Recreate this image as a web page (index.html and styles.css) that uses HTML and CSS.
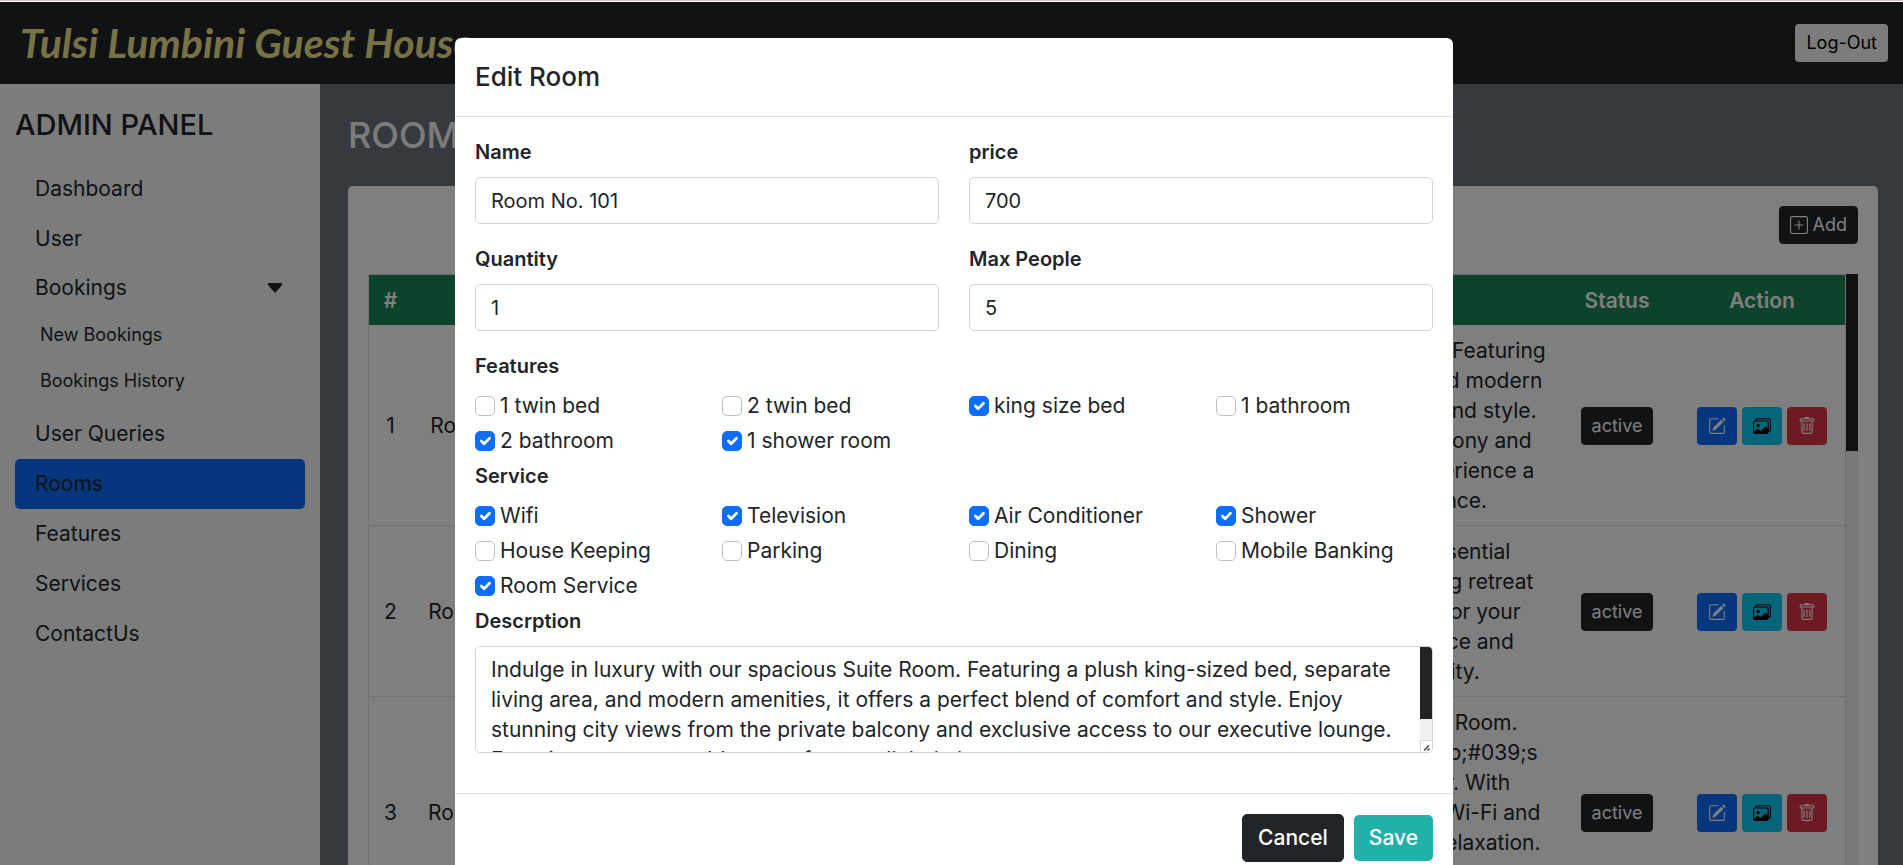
FILE: index.html
```html
<!DOCTYPE html>
<html lang="en">
<head>
<meta charset="utf-8">
<meta name="viewport" content="width=device-width, initial-scale=1">
<title>Admin Panel - Rooms</title>
<link rel="stylesheet" href="styles.css">
</head>
<body>
<svg class="sprite" aria-hidden="true">
  <symbol id="i-plus" viewBox="0 0 16 16"><path d="M14 1a1 1 0 0 1 1 1v12a1 1 0 0 1-1 1H2a1 1 0 0 1-1-1V2a1 1 0 0 1 1-1h12zM2 0a2 2 0 0 0-2 2v12a2 2 0 0 0 2 2h12a2 2 0 0 0 2-2V2a2 2 0 0 0-2-2H2z"/><path d="M8 4a.5.5 0 0 1 .5.5v3h3a.5.5 0 0 1 0 1h-3v3a.5.5 0 0 1-1 0v-3h-3a.5.5 0 0 1 0-1h3v-3A.5.5 0 0 1 8 4z"/></symbol>
  <symbol id="i-edit" viewBox="0 0 16 16"><path d="M15.502 1.94a.5.5 0 0 1 0 .706L14.459 3.69l-2-2L13.502.646a.5.5 0 0 1 .707 0l1.293 1.293zm-1.75 2.456-2-2L4.939 9.21a.5.5 0 0 0-.121.196l-.805 2.414a.25.25 0 0 0 .316.316l2.414-.805a.5.5 0 0 0 .196-.12l6.813-6.814z"/><path fill-rule="evenodd" d="M1 13.5A1.5 1.5 0 0 0 2.5 15h11a1.5 1.5 0 0 0 1.5-1.5v-6a.5.5 0 0 0-1 0v6a.5.5 0 0 1-.5.5h-11a.5.5 0 0 1-.5-.5v-11a.5.5 0 0 1 .5-.5H9a.5.5 0 0 0 0-1H2.5A1.5 1.5 0 0 0 1 2.5v11z"/></symbol>
  <symbol id="i-images" viewBox="0 0 16 16"><path d="M4.502 9a1.5 1.5 0 1 0 0-3 1.5 1.5 0 0 0 0 3z"/><path d="M14.002 13a2 2 0 0 1-2 2h-10a2 2 0 0 1-2-2V5A2 2 0 0 1 2 3a2 2 0 0 1 2-2h10a2 2 0 0 1 2 2v8a2 2 0 0 1-1.998 2zM14 2H4a1 1 0 0 0-1 1h9.002a2 2 0 0 1 2 2v7A1 1 0 0 0 15 11V3a1 1 0 0 0-1-1zM2.002 4a1 1 0 0 0-1 1v8l2.646-2.354a.5.5 0 0 1 .63-.062l2.66 1.773 3.71-3.71a.5.5 0 0 1 .577-.094l1.777 1.947V5a1 1 0 0 0-1-1h-10z"/></symbol>
  <symbol id="i-trash" viewBox="0 0 16 16"><path d="M5.5 5.5A.5.5 0 0 1 6 6v6a.5.5 0 0 1-1 0V6a.5.5 0 0 1 .5-.5Zm2.5 0a.5.5 0 0 1 .5.5v6a.5.5 0 0 1-1 0V6a.5.5 0 0 1 .5-.5Zm3 .5a.5.5 0 0 0-1 0v6a.5.5 0 0 0 1 0V6Z"/><path d="M14.5 3a1 1 0 0 1-1 1H13v9a2 2 0 0 1-2 2H5a2 2 0 0 1-2-2V4h-.5a1 1 0 0 1-1-1V2a1 1 0 0 1 1-1H6a1 1 0 0 1 1-1h2a1 1 0 0 1 1 1h3.5a1 1 0 0 1 1 1v1ZM4.118 4 4 4.059V13a1 1 0 0 0 1 1h6a1 1 0 0 0 1-1V4.059L11.882 4H4.118ZM2.5 3h11V2h-11v1Z"/></symbol>
  <symbol id="i-caret" viewBox="0 0 16 16"><path d="M7.247 11.14 2.451 5.658C1.885 5.013 2.345 4 3.204 4h9.592a1 1 0 0 1 .753 1.659l-4.796 5.48a1 1 0 0 1-1.506 0z"/></symbol>
</svg>

<header class="topbar">
  <h1 class="brand">Tulsi Lumbini Guest House</h1>
  <a class="btn btn-sm btn-light" href="#">Log-Out</a>
</header>

<div class="layout">
  <aside class="sidebar">
    <h2 class="sidebar-title">ADMIN PANEL</h2>
    <nav class="nav">
      <a class="nav-link" href="#">Dashboard</a>
      <a class="nav-link" href="#">User</a>
      <button class="nav-link nav-toggle" type="button">Bookings <svg class="caret"><use href="#i-caret"/></svg></button>
      <div class="subnav">
        <a class="subnav-link" href="#">New Bookings</a>
        <a class="subnav-link" href="#">Bookings History</a>
      </div>
      <a class="nav-link" href="#">User Queries</a>
      <a class="nav-link active" href="#">Rooms</a>
      <a class="nav-link" href="#">Features</a>
      <a class="nav-link" href="#">Services</a>
      <a class="nav-link" href="#">ContactUs</a>
    </nav>
  </aside>

  <main class="main">
    <h2 class="page-title">ROOMS</h2>
    <section class="card">
      <div class="card-actions">
        <button class="btn btn-sm btn-dark" type="button"><svg class="icon"><use href="#i-plus"/></svg>Add</button>
      </div>
      <div class="table-frame">
        <div class="table-scroll">
          <table class="table">
            <colgroup>
              <col class="col-num"><col class="col-name"><col class="col-mid"><col class="col-mid"><col class="col-mid"><col><col class="col-status"><col class="col-action">
            </colgroup>
            <thead>
              <tr><th>#</th><th>Name</th><th>Guests</th><th>Price</th><th>Quantity</th><th>Description</th><th>Status</th><th>Action</th></tr>
            </thead>
            <tbody id="rooms"></tbody>
          </table>
        </div>
        <div class="scrollbar" aria-hidden="true"><div class="thumb thumb-table"></div></div>
      </div>
    </section>
  </main>
</div>

<div class="overlay">
  <form class="modal" role="dialog" aria-labelledby="modal-title">
    <div class="modal-header"><h3 class="modal-title" id="modal-title">Edit Room</h3></div>
    <div class="modal-body">
      <div class="fields">
        <div class="field"><label class="label" for="name">Name</label><input class="control" id="name" type="text" value="Room No. 101"></div>
        <div class="field"><label class="label" for="price">price</label><input class="control" id="price" type="text" value="700"></div>
        <div class="field"><label class="label" for="quantity">Quantity</label><input class="control" id="quantity" type="text" value="1"></div>
        <div class="field"><label class="label" for="people">Max People</label><input class="control" id="people" type="text" value="5"></div>
      </div>
      <fieldset class="group">
        <legend class="label">Features</legend>
        <div class="checks">
          <label class="check"><input type="checkbox">1 twin bed</label>
          <label class="check"><input type="checkbox">2 twin bed</label>
          <label class="check"><input type="checkbox" checked>king size bed</label>
          <label class="check"><input type="checkbox">1 bathroom</label>
          <label class="check"><input type="checkbox" checked>2 bathroom</label>
          <label class="check"><input type="checkbox" checked>1 shower room</label>
        </div>
      </fieldset>
      <fieldset class="group">
        <legend class="label">Service</legend>
        <div class="checks">
          <label class="check"><input type="checkbox" checked>Wifi</label>
          <label class="check"><input type="checkbox" checked>Television</label>
          <label class="check"><input type="checkbox" checked>Air Conditioner</label>
          <label class="check"><input type="checkbox" checked>Shower</label>
          <label class="check"><input type="checkbox">House Keeping</label>
          <label class="check"><input type="checkbox">Parking</label>
          <label class="check"><input type="checkbox">Dining</label>
          <label class="check"><input type="checkbox">Mobile Banking</label>
          <label class="check"><input type="checkbox" checked>Room Service</label>
        </div>
      </fieldset>
      <div class="field">
        <label class="label" for="desc">Descrption</label>
        <div class="area-frame">
          <textarea class="area" id="desc">Indulge in luxury with our spacious Suite Room. Featuring a plush king-sized bed, separate living area, and modern amenities, it offers a perfect blend of comfort and style. Enjoy stunning city views from the private balcony and exclusive access to our executive lounge. Experience a memorable stay of unparalleled elegance.</textarea>
          <div class="scrollbar" aria-hidden="true">
            <div class="thumb thumb-area"></div>
            <svg class="grip" viewBox="0 0 12 12"><path d="M0 0h12v12H0z" fill="#fff"/><path d="M.5 12V.5H12" fill="none" stroke="#d9d9d9"/><path d="M4 10.5 9 5.5M7.5 10.5 9.5 8.5" stroke="#444" stroke-width="1.5"/></svg>
          </div>
        </div>
      </div>
    </div>
    <div class="modal-footer">
      <button class="btn btn-dark" type="reset">Cancel</button>
      <button class="btn btn-save" type="submit">Save</button>
    </div>
  </form>
</div>
<script src="script.js"></script>
</body>
</html>
```
FILE: styles.css
```css
* { box-sizing: border-box; }

body {
  margin: 0;
  height: 100vh;
  overflow: hidden;
  border-top: 1px solid #cfc4cc;
  padding-top: 1px;
  background: #fff;
  color: #212529;
  font: 400 21px/30px Inter, "Open Sans", sans-serif;
}

h1, h2, h3 { margin: 0; font-weight: 500; }
a { color: inherit; text-decoration: none; }
.sprite { display: none; }

.btn {
  display: inline-flex;
  align-items: center;
  justify-content: center;
  gap: 5px;
  border: 1px solid transparent;
  border-radius: 5px;
  padding: 8px 15px;
  font: 500 21px/30px Inter, "Open Sans", sans-serif;
  color: #fff;
}
.btn-sm { padding: 5px 10px; font-size: 18px; font-weight: 400; line-height: 26px; border-radius: 4px; min-height: 38px; }
.btn-dark { background: #212529; border-color: #212529; }
.btn-light { background: #f8f9fa; color: #000; }
.btn-blue { background: #0d6efd; }
.btn-cyan { background: #0dcaf0; color: #000; }
.btn-red { background: #dc3545; }
.btn-save { background: #20b2aa; padding: 7px 14px; }
.icon { width: 18px; height: 18px; fill: currentColor; }

.topbar {
  display: flex;
  align-items: center;
  justify-content: space-between;
  height: 82px;
  padding: 0 15px 0 20px;
  background: #212529;
}
.brand { color: #f0e68c; font: italic 700 41px/50px Lato, sans-serif; white-space: nowrap; }

.layout { display: grid; grid-template-columns: 320px 1fr; }
.sidebar { padding: 20px 15px; background: #f8f9fa; min-height: 100vh; }
.sidebar-title { font-size: 29px; line-height: 42px; margin-bottom: 18px; }
.nav { display: flex; flex-direction: column; }
.nav-link { padding: 10px 20px; border-radius: 5px; }
.nav-link.active { background: #0d6efd; }
.nav-toggle {
  display: flex;
  align-items: center;
  justify-content: space-between;
  border: 0;
  background: none;
  color: inherit;
  font: inherit;
  padding: 9px 20px;
}
.caret { width: 20px; height: 20px; fill: currentColor; }
.subnav { display: flex; flex-direction: column; margin-bottom: 5px; }
.subnav-link { padding: 8px 25px; font-size: 18px; }

.main { padding: 30px 25px 0 28px; background: #6c757d; min-width: 0; }
.page-title { color: #f8f9fa; font-size: 36px; line-height: 42px; margin-bottom: 30px; }
.card { background: #fff; border-radius: 5px; padding: 20px; }
.card-actions { display: flex; justify-content: flex-end; margin-bottom: 30px; }
.table-frame { display: flex; height: 625px; }
.table-scroll { flex: 1; min-width: 0; overflow-y: auto; scrollbar-width: none; }
.table {
  width: 100%;
  table-layout: fixed;
  border-collapse: separate;
  border-spacing: 0;
  border: 1px solid #dee2e6;
  text-align: center;
}
.table th, .table td { padding: 11px 10px 9px; white-space: nowrap; }
.table th { background: #198754; color: #fff; font-weight: 600; }
.table td { border-bottom: 1px solid #dee2e6; }
.col-num { width: 43px; }
.col-name { width: 170px; }
.col-mid { width: 128px; }
.col-status { width: 124px; }
.col-action { width: 166px; }
.actions { display: flex; justify-content: center; gap: 5px; }

.scrollbar { display: flex; flex-direction: column; flex: none; width: 12px; background: #f1f1f1; }
.thumb { background: #222; }
.thumb-table { height: 177px; }
.thumb-area { height: 72px; }
.grip { width: 12px; height: 12px; margin-top: auto; }

.overlay {
  position: fixed;
  inset: 2px 0 0;
  display: flex;
  justify-content: center;
  align-items: flex-start;
  overflow: hidden;
  padding: 36px 0 0 5px;
  background: rgba(0, 0, 0, 0.5);
}
.modal { width: 998px; max-width: 100%; background: #fff; border-radius: 6px; }
.modal-header { padding: 20px; border-bottom: 1px solid #dee2e6; }
.modal-title { font-size: 26px; line-height: 38px; }
.modal-body { padding: 20px 20px 40px; }
.fields { display: grid; grid-template-columns: 1fr 1fr; gap: 20px 30px; margin-bottom: 20px; }
.field { display: flex; flex-direction: column; }
.label { display: block; padding: 0; margin-bottom: 10px; font-size: 20px; font-weight: 600; }
.control {
  width: 100%;
  height: 47px;
  border: 1px solid #ced4da;
  border-radius: 5px;
  padding: 7px 15px;
  background: #fff;
  color: #212529;
  font: inherit;
  font-size: 20px;
}
.area-frame { display: flex; height: 107px; border: 1px solid #ced4da; border-radius: 5px; overflow: hidden; }
.area {
  flex: 1;
  border: 0;
  padding: 8px 15px;
  background: #fff;
  color: #212529;
  font: inherit;
  resize: none;
  scrollbar-width: none;
}
.group { border: 0; margin: 0; padding: 0; min-width: 0; }
.checks { display: grid; grid-template-columns: repeat(4, 1fr); column-gap: 30px; }
.check { display: flex; align-items: center; gap: 5px; margin-bottom: 5px; white-space: nowrap; }
.check input {
  appearance: none;
  flex: none;
  width: 20px;
  height: 20px;
  margin: 0;
  border: 1px solid #bfbfbf;
  border-radius: 5px;
  background: #fff;
}
.check input:checked {
  border-color: #0d6efd;
  background: #0d6efd url("data:image/svg+xml,%3csvg xmlns='http://www.w3.org/2000/svg' viewBox='0 0 20 20'%3e%3cpath fill='none' stroke='%23fff' stroke-linecap='round' stroke-linejoin='round' stroke-width='3' d='M6 10l3 3l6-6'/%3e%3c/svg%3e") center / contain;
}
.modal-footer {
  display: flex;
  align-items: center;
  justify-content: flex-end;
  gap: 10px;
  padding: 20px;
  border-top: 1px solid #dee2e6;
}
```
FILE: script.js
```javascript
const suite = [
  "Indulge in luxury with our spacious Suite Room. Featuring",
  "a plush king-sized bed, separate living area, and modern",
  "amenities, it offers a perfect blend of comfort and style.",
  "Enjoy stunning city views from the private balcony and",
  "exclusive access to our executive lounge. Experience a",
  "truly memorable stay of unequalled elegance."
];
const standard = [
  "Our Standard Room comes with all of the essential",
  "amenities for a pleasant stay, offering a relaxing retreat",
  "with comfortable bed, private bath and a TV for your",
  "leisure. Enjoy the right balance of convenience and",
  "comfort in a room made with total simplicity."
];
const deluxe = [
  "Feel the comfort and style of our new Deluxe Room.",
  "Beautifully furnished for our modern guest&amp;amp;#039;s",
  "needs, it is an ideal choice for every traveller. With",
  "a king-sized bed, a work desk, complimentary Wi-Fi and",
  "a private bath, it is the right place for rest and relaxation.",
  "Enjoy room service at any hour",
  "and a view of the garden."
];
const texts = [suite, standard, deluxe];
const icon = (name) => `<svg class="icon"><use href="#i-${name}"/></svg>`;

document.getElementById("rooms").innerHTML = texts.map((lines, i) => `
  <tr>
    <td>${i + 1}</td><td>Room No. ${101 + i}</td><td>5</td><td>700</td><td>1</td>
    <td>${lines.join("<br>")}</td>
    <td><button class="btn btn-sm btn-dark" type="button">active</button></td>
    <td><div class="actions">
      <button class="btn btn-sm btn-blue" type="button" aria-label="Edit">${icon("edit")}</button>
      <button class="btn btn-sm btn-cyan" type="button" aria-label="Images">${icon("images")}</button>
      <button class="btn btn-sm btn-red" type="button" aria-label="Delete">${icon("trash")}</button>
    </div></td>
  </tr>`).join("");
```
